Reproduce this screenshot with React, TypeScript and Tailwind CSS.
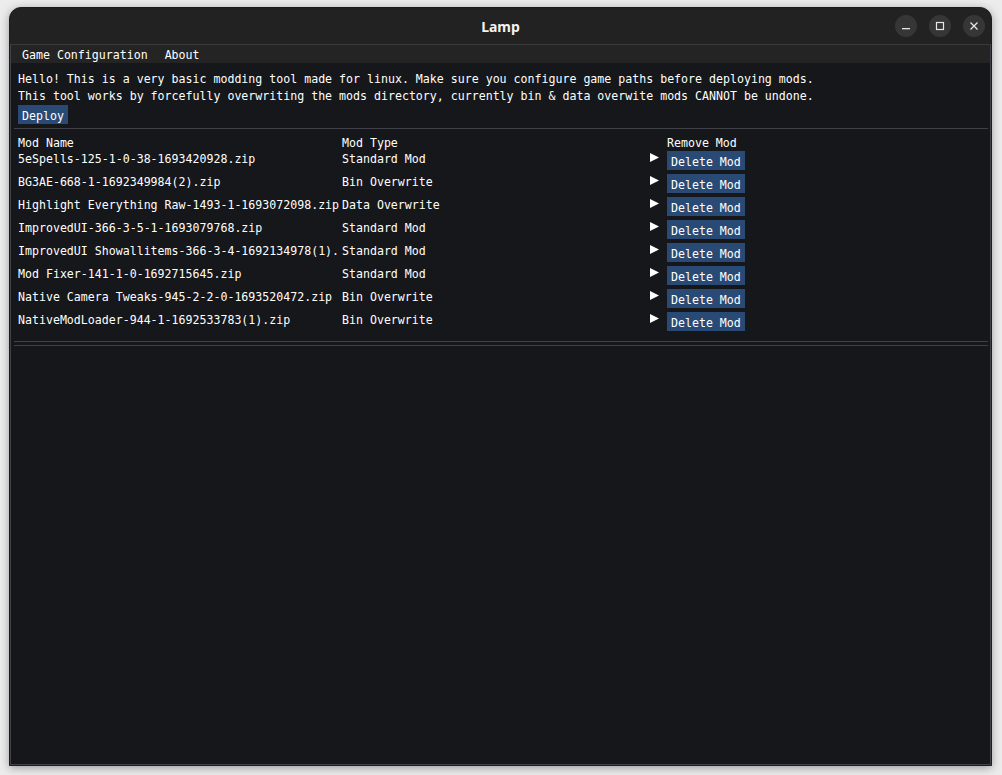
import React from 'react';

type Mod = { name: string; type: string };

const mods: Mod[] = [
  { name: '5eSpells-125-1-0-38-1693420928.zip', type: 'Standard Mod' },
  { name: 'BG3AE-668-1-1692349984(2).zip', type: 'Bin Overwrite' },
  { name: 'Highlight Everything Raw-1493-1-1693072098.zip', type: 'Data Overwrite' },
  { name: 'ImprovedUI-366-3-5-1-1693079768.zip', type: 'Standard Mod' },
  { name: 'ImprovedUI Showallitems-366-3-4-1692134978(1).zip', type: 'Standard Mod' },
  { name: 'Mod Fixer-141-1-0-1692715645.zip', type: 'Standard Mod' },
  { name: 'Native Camera Tweaks-945-2-2-0-1693520472.zip', type: 'Bin Overwrite' },
  { name: 'NativeModLoader-944-1-1692533783(1).zip', type: 'Bin Overwrite' },
];

const mono = { fontFamily: '"DejaVu Sans Mono", "Liberation Mono", monospace' };

const ImButton: React.FC<{ label: string }> = ({ label }) => (
  <button className="h-[19px] px-[4px] pt-[4px] leading-[13px] bg-[#294a74] text-white text-[11.6px] whitespace-pre">
    {label}
  </button>
);

const App: React.FC = () => {
  return (
    <div className="min-h-screen bg-[#ececec] pt-[7px] pl-[9px]">
      <div className="w-[983px] h-[759px] rounded-t-[12px] overflow-hidden bg-[#222222] border border-[#1c1c1c] flex flex-col shadow-[0_2px_10px_rgba(0,0,0,0.35)]">
        {/* title bar */}
        <div className="h-[37px] shrink-0 flex items-center relative border-b border-[#3a3a3a]">
          <div
            className="flex-1 text-center text-[14px] font-bold text-[#f2f2f2]"
            style={{ fontFamily: '"Noto Sans", sans-serif' }}
          >
            Lamp
          </div>
          <div className="absolute right-[6px] top-[7px] flex gap-[12px]">
            <div className="w-[22px] h-[22px] rounded-full bg-[#363636] flex items-center justify-center">
              <svg width="10" height="10" viewBox="0 0 10 10">
                <rect x="1" y="7" width="8" height="1.3" fill="#e6e6e6" />
              </svg>
            </div>
            <div className="w-[22px] h-[22px] rounded-full bg-[#363636] flex items-center justify-center">
              <svg width="10" height="10" viewBox="0 0 10 10">
                <rect x="1.5" y="1.5" width="7" height="7" fill="none" stroke="#e6e6e6" strokeWidth="1.2" />
              </svg>
            </div>
            <div className="w-[22px] h-[22px] rounded-full bg-[#363636] flex items-center justify-center">
              <svg width="10" height="10" viewBox="0 0 10 10">
                <path d="M1.5 1.5 L8.5 8.5 M8.5 1.5 L1.5 8.5" stroke="#e6e6e6" strokeWidth="1.3" />
              </svg>
            </div>
          </div>
        </div>

        {/* imgui content */}
        <div
          className="flex-1 flex flex-col bg-[#16171a] border-x border-b border-[#41424a] text-white text-[11.6px]"
          style={mono}
        >
          <div className="h-[18px] shrink-0 bg-[#242424] flex items-start pl-[11px] pt-[2px] gap-[17px] leading-[16px] whitespace-pre">
            <span>Game Configuration</span>
            <span>About</span>
          </div>

          <div className="pl-[7px] pt-[8px] leading-[17px] whitespace-pre">
            <div>Hello! This is a very basic modding tool made for linux. Make sure you configure game paths before deploying mods.</div>
            <div>This tool works by forcefully overwriting the mods directory, currently bin &amp; data overwite mods CANNOT be undone.</div>
          </div>
          <div className="pl-[7px] flex">
            <ImButton label="Deploy" />
          </div>

          <div className="mt-[4px] ml-[3px] mr-[2px] h-px bg-[#3f4048]" />

          <div className="pl-[7px] mt-[8px] grid grid-cols-[324px_325px_1fr] leading-[13px] h-[14px] whitespace-pre">
            <div>Mod Name</div>
            <div>Mod Type</div>
            <div>Remove Mod</div>
          </div>

          <div className="pl-[7px]">
            {mods.map((mod, index) => (
              <div key={index} className="grid grid-cols-[324px_325px_1fr] h-[23px] items-start">
                <div className="w-[321px] overflow-hidden whitespace-pre leading-[13px] pt-[2px]">{mod.name}</div>
                <div className="flex items-start">
                  <div className="flex-1 whitespace-pre leading-[13px] pt-[2px]">{mod.type}</div>
                  <svg width="9" height="9" viewBox="0 0 9 9" className="mt-[2px] mr-[8px]">
                    <polygon points="0,0 9,4.5 0,9" fill="#ffffff" />
                  </svg>
                </div>
                <div className="flex">
                  <ImButton label="Delete Mod" />
                </div>
              </div>
            ))}
          </div>

          <div className="mt-[6px] ml-[3px] mr-[2px] h-px bg-[#3f4048]" />
          <div className="mt-[3px] ml-[3px] mr-[2px] h-px bg-[#3f4048]" />
        </div>
      </div>
    </div>
  );
};

export default App;
